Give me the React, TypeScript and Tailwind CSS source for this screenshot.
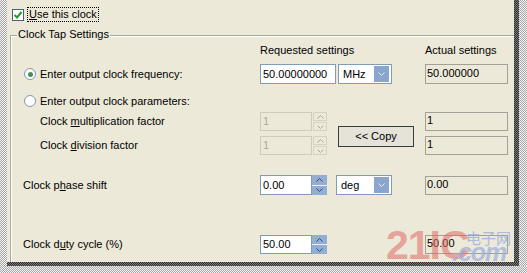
import React from "react";

const light =
  "bg-[conic-gradient(#a8a8a8_25%,#f2f2f2_0_50%,#a8a8a8_0_75%,#f2f2f2_0)] bg-[length:2px_2px]";
const dark =
  "bg-[conic-gradient(#2e2e2e_25%,#7a7a7a_0_50%,#2e2e2e_0_75%,#7a7a7a_0)] bg-[length:2px_2px]";

function Chevron({ dir, color }: { dir: "up" | "down"; color: string }) {
  return (
    <svg width="7" height="4" viewBox="0 0 7 4" className="block">
      <path
        d={dir === "up" ? "M0.5 3.5 L3.5 0.5 L6.5 3.5" : "M0.5 0.5 L3.5 3.5 L6.5 0.5"}
        fill="none"
        stroke={color}
        strokeWidth="1"
      />
    </svg>
  );
}

function Radio({ checked }: { checked?: boolean }) {
  return (
    <div className="w-[12px] h-[12px] rounded-full border border-[#8496ad] bg-white flex items-center justify-center shrink-0">
      {checked && <div className="w-[5px] h-[5px] rounded-full bg-[#4a8a58]" />}
    </div>
  );
}

function Spin({ value, disabled, tall }: { value: string; disabled?: boolean; tall?: boolean }) {
  const h = tall ? "h-[20px]" : "h-[19px]";
  return (
    <div className={`flex ${h}`}>
      <div
        className={
          disabled
            ? "w-[52px] h-full border border-[#cfccbf] bg-[#ece9d8] text-[#aca899] flex items-center pl-[2px]"
            : "w-[52px] h-full border border-[#7f9db9] bg-white flex items-center pl-[2px]"
        }
      >
        {value}
      </div>
      {disabled ? (
        <div className="w-[14px] h-full flex flex-col gap-[1px] ml-[1px]">
          <div className="flex-1 border border-[#d5d2c5] flex items-center justify-center">
            <Chevron dir="up" color="#aca899" />
          </div>
          <div className="flex-1 border border-[#d5d2c5] flex items-center justify-center">
            <Chevron dir="down" color="#aca899" />
          </div>
        </div>
      ) : (
        <div className="w-[15px] h-full flex flex-col gap-[1px] bg-[#e8eef6]">
          <div className="flex-1 bg-[#94aed3] flex items-center justify-center">
            <Chevron dir="up" color="#2d4a78" />
          </div>
          <div className="flex-1 bg-[#94aed3] flex items-center justify-center">
            <Chevron dir="down" color="#2d4a78" />
          </div>
        </div>
      )}
    </div>
  );
}

function Select({ value, w }: { value: string; w: string }) {
  return (
    <div className={`${w} h-[20px] border border-[#7f9db9] bg-white flex items-stretch p-[1px] pr-[2px]`}>
      <span className="flex-1 flex items-center pl-[3px]">{value}</span>
      <div className="w-[15px] bg-[#8aa6cf] flex items-center justify-center">
        <Chevron dir="down" color="#e6edf7" />
      </div>
    </div>
  );
}

function Actual({ value, tall }: { value: string; tall?: boolean }) {
  return (
    <div
      className={`w-[83px] ${tall ? "h-[20px]" : "h-[19px]"} border border-[#a3a197] flex items-center pl-[1px] pb-[2px]`}
    >
      {value}
    </div>
  );
}

export default function App() {
  return (
    <div className="relative w-[527px] h-[273px] flex flex-col overflow-hidden font-['Liberation_Sans',Arial,sans-serif] text-[11px] leading-[13px] text-black">
      <div className="flex h-[262px]">
        <div className={`w-[7px] ${light}`} />
        <div className="w-[507px] bg-[#ece9d8] flex flex-col">
          {/* checkbox row */}
          <div className="flex items-center h-[15px] mt-[7px]">
            <div className="ml-[5px] w-[12px] h-[12px] border border-[#4a5f7c] bg-white flex items-center justify-center">
              <svg width="10" height="10" viewBox="0 0 10 10">
                <path d="M1.5 5 L4 7.5 L8.5 2" fill="none" stroke="#22a02a" strokeWidth="2" />
              </svg>
            </div>
            <div className="ml-[3px] h-[15px] w-[72px] border border-dotted border-black flex items-center pl-[1px]">
              <span>
                <u>U</u>se this clock
              </span>
            </div>
          </div>

          {/* group box */}
          <div className="relative ml-[3px] mt-[13px] flex-1 border-t border-l border-[#aca899] shadow-[inset_1px_1px_0_#ffffff] flex flex-col">
            <span className="absolute left-[6px] top-[-8px] px-[1px] bg-[#ece9d8]">Clock Tap Settings</span>

            {/* header */}
            <div className="mt-[7px] h-[14px] flex items-center">
              <div className="w-[249px]" />
              <div className="w-[165px]">Requested settings</div>
              <div>Actual settings</div>
            </div>

            {/* frequency row */}
            <div className="mt-[7px] h-[20px] flex items-center">
              <div className="w-[249px] flex items-center pl-[13px]">
                <Radio checked />
                <span className="ml-[4px]">Enter output clock frequency:</span>
              </div>
              <div className="w-[165px] flex">
                <div className="w-[76px] h-[20px] border border-[#7f9db9] bg-white flex items-center pl-[2px]">
                  50.00000000
                </div>
                <div className="ml-[2px]">
                  <Select value="MHz" w="w-[54px]" />
                </div>
              </div>
              <Actual value="50.000000" tall />
            </div>

            {/* parameters row */}
            <div className="mt-[10px] h-[14px] flex items-center">
              <div className="w-[249px] flex items-center pl-[13px]">
                <Radio />
                <span className="ml-[4px]">Enter output clock parameters:</span>
              </div>
            </div>

            {/* mult / div rows */}
            <div className="mt-[4px] flex">
              <div className="w-[249px] flex flex-col gap-[5px] pl-[29px]">
                <div className="h-[19px] flex items-center">
                  <span>
                    Clock <u>m</u>ultiplication factor
                  </span>
                </div>
                <div className="h-[19px] flex items-center">
                  <span>
                    Clock <u>d</u>ivision factor
                  </span>
                </div>
              </div>
              <div className="w-[78px] flex flex-col gap-[5px]">
                <Spin value="1" disabled />
                <Spin value="1" disabled />
              </div>
              <div className="w-[87px]">
                <div className="mt-[14px] w-[76px] h-[21px] border border-[#3a3a3a] bg-[#e4e2d9] flex items-center justify-center">
                  &lt;&lt; Copy
                </div>
              </div>
              <div className="flex flex-col gap-[5px]">
                <Actual value="1" />
                <Actual value="1" />
              </div>
            </div>

            {/* phase row */}
            <div className="mt-[20px] h-[20px] flex items-center">
              <div className="w-[249px] pl-[12px]">
                Clock p<u>h</u>ase shift
              </div>
              <div className="w-[165px] flex">
                <Spin value="0.00" tall />
                <div className="ml-[9px]">
                  <Select value="deg" w="w-[56px]" />
                </div>
              </div>
              <Actual value="0.00" />
            </div>

            {/* duty row */}
            <div className="mt-[40px] h-[19px] flex items-center">
              <div className="w-[249px] pl-[12px]">
                Clock d<u>u</u>ty cycle (%)
              </div>
              <div className="w-[165px] flex">
                <Spin value="50.00" />
              </div>
              <Actual value="50.00" />
            </div>
          </div>
        </div>
        <div className={`w-[5px] ${dark}`} />
        <div className={`w-[8px] ${light}`} />
      </div>
      <div className="flex h-[4px]">
        <div className={`w-[7px] ${light}`} />
        <div className={`w-[512px] ${dark}`} />
        <div className={`flex-1 ${light}`} />
      </div>
      <div className={`h-[7px] ${light}`} />

      {/* watermark overlay */}
      <span className="absolute left-[386px] top-[225px] pointer-events-none select-none font-bold text-[41px] leading-[41px] tracking-[-1px] text-[#e06a6a] opacity-55">
        21IC
      </span>
      <span className="absolute left-[466px] top-[230px] pointer-events-none select-none font-['Noto_Sans_CJK_SC',sans-serif] text-[15px] leading-[16px] text-[#9aaee0] opacity-80">
        电子网
      </span>
      <span className="absolute left-[452px] top-[241px] pointer-events-none select-none font-bold italic text-[25px] leading-[22px] tracking-[-1px] text-[#9aaee0] opacity-70">
        .com
      </span>
    </div>
  );
}
